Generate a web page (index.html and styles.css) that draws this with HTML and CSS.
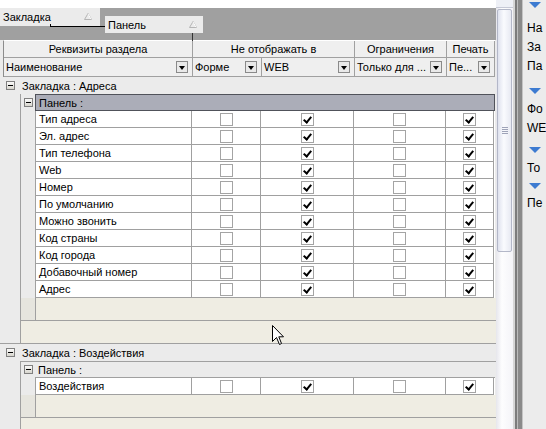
FILE: index.html
```html
<!DOCTYPE html>
<html lang="ru">
<head>
<meta charset="utf-8">
<title>Реквизиты раздела</title>
<link rel="stylesheet" href="styles.css">
</head>
<body>
<div class="app">
  <div class="main">
    <div class="topstrip"></div>
    <div class="groupbar">
      <div class="tab tab1"><span>Закладка</span><svg class="tri" width="8" height="7" viewBox="0 0 8 7"><polygon points="4,0.5 7.5,6.5 0.5,6.5" fill="none" stroke="#b4b4b4"/><line x1="4" y1="1" x2="7" y2="6.2" stroke="#fff"/></svg></div>
      <div class="tab tab2"><span>Панель</span><svg class="tri" width="8" height="7" viewBox="0 0 8 7"><polygon points="4,0.5 7.5,6.5 0.5,6.5" fill="none" stroke="#b4b4b4"/><line x1="4" y1="1" x2="7" y2="6.2" stroke="#fff"/></svg></div>
      <div class="conn"></div>
    </div>
    <div class="droptick"></div>
    <div class="grid">
      <div class="hrow h1">
        <div class="hc">Реквизиты раздела</div>
        <div class="hc">Не отображать в</div>
        <div class="hc">Ограничения</div>
        <div class="hc">Печать</div>
      </div>
      <div class="hrow h2">
        <div class="hc"><span>Наименование</span><span class="dd"></span></div>
        <div class="hc"><span>Форме</span><span class="dd"></span></div>
        <div class="hc"><span>WEB</span><span class="dd"></span></div>
        <div class="hc"><span>Только для ...</span><span class="dd"></span></div>
        <div class="hc"><span>Пе...</span><span class="dd"></span></div>
      </div>

      <div class="section">
        <div class="tabrow"><span class="exp"></span><span class="tabtxt">Закладка : Адреса</span></div>
        <div class="tabbody">
          <div class="panelrow sel"><span class="exp"></span><div class="band">Панель :</div></div>
          <div class="datarows">
            <div class="drow"><div class="nm">Тип адреса</div><div><span class="cb"></span></div><div><span class="cb on"></span></div><div><span class="cb"></span></div><div><span class="cb on"></span></div></div>
            <div class="drow"><div class="nm">Эл. адрес</div><div><span class="cb"></span></div><div><span class="cb on"></span></div><div><span class="cb"></span></div><div><span class="cb on"></span></div></div>
            <div class="drow"><div class="nm">Тип телефона</div><div><span class="cb"></span></div><div><span class="cb on"></span></div><div><span class="cb"></span></div><div><span class="cb on"></span></div></div>
            <div class="drow"><div class="nm">Web</div><div><span class="cb"></span></div><div><span class="cb on"></span></div><div><span class="cb"></span></div><div><span class="cb on"></span></div></div>
            <div class="drow"><div class="nm">Номер</div><div><span class="cb"></span></div><div><span class="cb on"></span></div><div><span class="cb"></span></div><div><span class="cb on"></span></div></div>
            <div class="drow"><div class="nm">По умолчанию</div><div><span class="cb"></span></div><div><span class="cb on"></span></div><div><span class="cb"></span></div><div><span class="cb on"></span></div></div>
            <div class="drow"><div class="nm">Можно звонить</div><div><span class="cb"></span></div><div><span class="cb on"></span></div><div><span class="cb"></span></div><div><span class="cb on"></span></div></div>
            <div class="drow"><div class="nm">Код страны</div><div><span class="cb"></span></div><div><span class="cb on"></span></div><div><span class="cb"></span></div><div><span class="cb on"></span></div></div>
            <div class="drow"><div class="nm">Код города</div><div><span class="cb"></span></div><div><span class="cb on"></span></div><div><span class="cb"></span></div><div><span class="cb on"></span></div></div>
            <div class="drow"><div class="nm">Добавочный номер</div><div><span class="cb"></span></div><div><span class="cb on"></span></div><div><span class="cb"></span></div><div><span class="cb on"></span></div></div>
            <div class="drow"><div class="nm">Адрес</div><div><span class="cb"></span></div><div><span class="cb on"></span></div><div><span class="cb"></span></div><div><span class="cb on"></span></div></div>
          </div>
          <div class="panelfoot"><div class="pf-ind"></div><div class="pf-main"></div></div>
          <div class="tabfoot"></div>
        </div>
      </div>

      <div class="section second">
        <div class="tabrow"><span class="exp"></span><span class="tabtxt">Закладка : Воздействия</span></div>
        <div class="tabbody">
          <div class="panelrow plain"><span class="exp"></span><div class="plabel">Панель :</div></div>
          <div class="datarows top">
            <div class="drow"><div class="nm">Воздействия</div><div><span class="cb"></span></div><div><span class="cb on"></span></div><div><span class="cb"></span></div><div><span class="cb on"></span></div></div>
          </div>
          <div class="panelfoot"><div class="pf-ind"></div><div class="pf-main"></div></div>
          <div class="tabfoot"></div>
        </div>
      </div>
    </div>
    <svg class="cursor" width="13" height="21" viewBox="0 0 13 21"><path d="M0.5 0.5 L0.5 16.5 L4.5 12.5 L7.5 19.5 L9.5 18.5 L6.8 11.8 L11.5 11.8 Z" fill="#fff" stroke="#000" stroke-width="1"/></svg>
  </div>

  <div class="vscroll">
    <div class="sb-btn"></div>
    <div class="sb-thumb"><span class="grip"></span></div>
    <div class="sb-track"></div>
  </div>

  <div class="splitter"><span class="s1"></span><span class="s2"></span><span class="s3"></span><span class="s4"></span></div>

  <div class="side">
    <div class="shead first"><span class="btri"></span></div>
    <div class="sitem">На</div>
    <div class="sitem">За</div>
    <div class="sitem">Па</div>
    <div class="shead h2g"><span class="btri"></span></div>
    <div class="sitem">Фо</div>
    <div class="sitem">WE</div>
    <div class="shead h3g"><span class="btri"></span></div>
    <div class="sitem">То</div>
    <div class="shead h4g"><span class="btri"></span></div>
    <div class="sitem">Пе</div>
  </div>
</div>
</body>
</html>
```

FILE: styles.css
```css
* { box-sizing: border-box; margin: 0; padding: 0; }
html, body { width: 546px; height: 429px; overflow: hidden; background: #fff; }
body { font-family: "Liberation Sans", Arial, sans-serif; font-size: 11px; color: #000; }

.app { display: flex; width: 546px; height: 429px; }

.main { width: 496px; flex: none; display: flex; flex-direction: column; position: relative; overflow: hidden; }
.topstrip { height: 8px; background: #fff; flex: none; }
.groupbar { height: 32px; flex: none; background: #a0a0a0; position: relative; display: flex; align-items: flex-start; }
.tab { background: #ebebeb; display: flex; align-items: center; justify-content: space-between; white-space: nowrap; }
.tab1 { width: 100px; height: 18px; padding: 0 8px 1px 3px; }
.tab2 { width: 98px; height: 17px; margin-left: 5px; margin-top: 8px; padding: 0 6px 0 3px; }
.tri { display: block; }
.conn { position: absolute; left: 50px; top: 16px; width: 55px; height: 3px; border-left: 1px solid #000; border-bottom: 1px solid #000; }
.droptick { position: absolute; left: 192px; top: 33px; width: 1px; height: 8px; background: #333; }

.grid { flex: 1; background: #ebebeb; }

.hrow { display: grid; margin-left: 3px; width: 492px; border-left: 1px solid #8c8c8c; background: #efefef; }
.h1 { grid-template-columns: 189px 162px 92px 48px; height: 18px; border-top: 1px solid #fff; }
.h2 { grid-template-columns: 189px 69px 93px 92px 48px; height: 19px; }
.hc { border-right: 1px solid #a0a0a0; border-bottom: 1px solid #a0a0a0; display: flex; align-items: center; justify-content: center; white-space: nowrap; overflow: hidden; }
.h2 .hc { justify-content: space-between; padding: 0 4px 0 2px; }
.dd { width: 12px; height: 12px; border: 1px solid #8a8a8a; background: #e9e9e9; display: flex; align-items: center; justify-content: center; flex: none; }
.dd::after { content: ""; border-left: 3.5px solid transparent; border-right: 3.5px solid transparent; border-top: 4px solid #000; margin-top: 1px; }

.exp { width: 9px; height: 9px; border: 1px solid #808080; background: linear-gradient(#fafafa, #d8d6ce); display: flex; align-items: center; justify-content: center; flex: none; }
.exp::after { content: ""; width: 5px; height: 1px; background: #000; }

.tabrow { height: 17px; display: flex; align-items: center; padding-left: 6px; background: #ebebeb; }
.tabtxt { margin-left: 7px; white-space: nowrap; }
.second .tabrow { height: 18px; border-top: 1px solid #a0a0a0; }

.tabbody { margin-left: 20px; border-left: 1px solid #a0a0a0; }

.panelrow { display: flex; align-items: center; height: 17px; }
.panelrow .exp { margin-left: 3px; }
.panelrow.sel .band { margin-left: 2px; width: 460px; height: 17px; background: #abadb8; border: 1px solid #50525a; display: flex; align-items: center; padding-left: 3px; }
.panelrow.plain { height: 16px; border-top: 1px solid #a0a0a0; }
.plabel { margin-left: 5px; }

.datarows { margin-left: 14px; width: 460px; border-left: 1px solid #a0a0a0; }
.datarows.top { border-top: 1px solid #a0a0a0; }
.drow { display: grid; grid-template-columns: 156px 69px 93px 92px 48px; height: 17px; background: #fff; }
.drow > div { border-right: 1px solid #a0a0a0; border-bottom: 1px solid #a0a0a0; display: flex; align-items: center; justify-content: center; }
.drow > .nm { justify-content: flex-start; padding-left: 3px; white-space: nowrap; }

.cb { width: 13px; height: 13px; border: 1px solid #a4a4a4; background: #fff; display: block; position: relative; }
.cb.on::after { content: ""; position: absolute; left: 3px; top: 1px; width: 3px; height: 6px; border-right: 2px solid #000; border-bottom: 2px solid #000; transform: rotate(40deg); }

.panelfoot { height: 23px; display: flex; border-bottom: 1px solid #a0a0a0; }
.pf-ind { width: 14px; background: #e6e5de; }
.pf-main { flex: 1; background: #efede3; border-left: 1px solid #a0a0a0; }
.tabfoot { height: 22px; background: #efede3; }

.cursor { position: absolute; left: 272px; top: 325px; }

.vscroll { width: 17px; flex: none; display: flex; flex-direction: column; background: linear-gradient(90deg, #e6e6ec, #fdfdfe 35%, #f4f4f8); }
.sb-btn { height: 8px; border-bottom: 1px solid #c6c9d6; background: #eef0f6; }
.sb-thumb { height: 243px; margin: 1px 1px 0 1px; border: 1px solid #b3b7c8; border-radius: 2px; background: linear-gradient(90deg, #dfe2ee, #fafbfe 45%, #e7e9f2); display: flex; align-items: center; justify-content: center; }
.grip { width: 6px; height: 7px; background: repeating-linear-gradient(#9ea3b8 0 1px, transparent 1px 2px); }
.sb-track { flex: 1; }

.splitter { width: 10px; flex: none; display: flex; }
.splitter .s1 { width: 2px; background: #d6d6d6; }
.splitter .s2 { width: 2px; background: #7c7c7c; }
.splitter .s3 { width: 1px; background: #bcbcbc; }
.splitter .s4 { width: 5px; background: #8a8a8a; border-right: 1px solid #c4c4c4; }

.side { width: 23px; flex: none; background: #ececec; overflow: hidden; padding-left: 4px; white-space: nowrap; }
.shead { display: flex; padding-left: 2px; align-items: flex-end; }
.shead.first { height: 19px; align-items: flex-start; padding-top: 2px; }
.shead.h2g { height: 24px; padding-bottom: 6px; }
.shead.h3g { height: 21px; padding-bottom: 6px; }
.shead.h4g { height: 16px; padding-bottom: 5px; }
.btri { width: 0; height: 0; border-left: 6px solid transparent; border-right: 6px solid transparent; border-top: 6px solid #3d7bd1; }
.sitem { height: 19px; line-height: 19px; font-size: 12px; }
```
